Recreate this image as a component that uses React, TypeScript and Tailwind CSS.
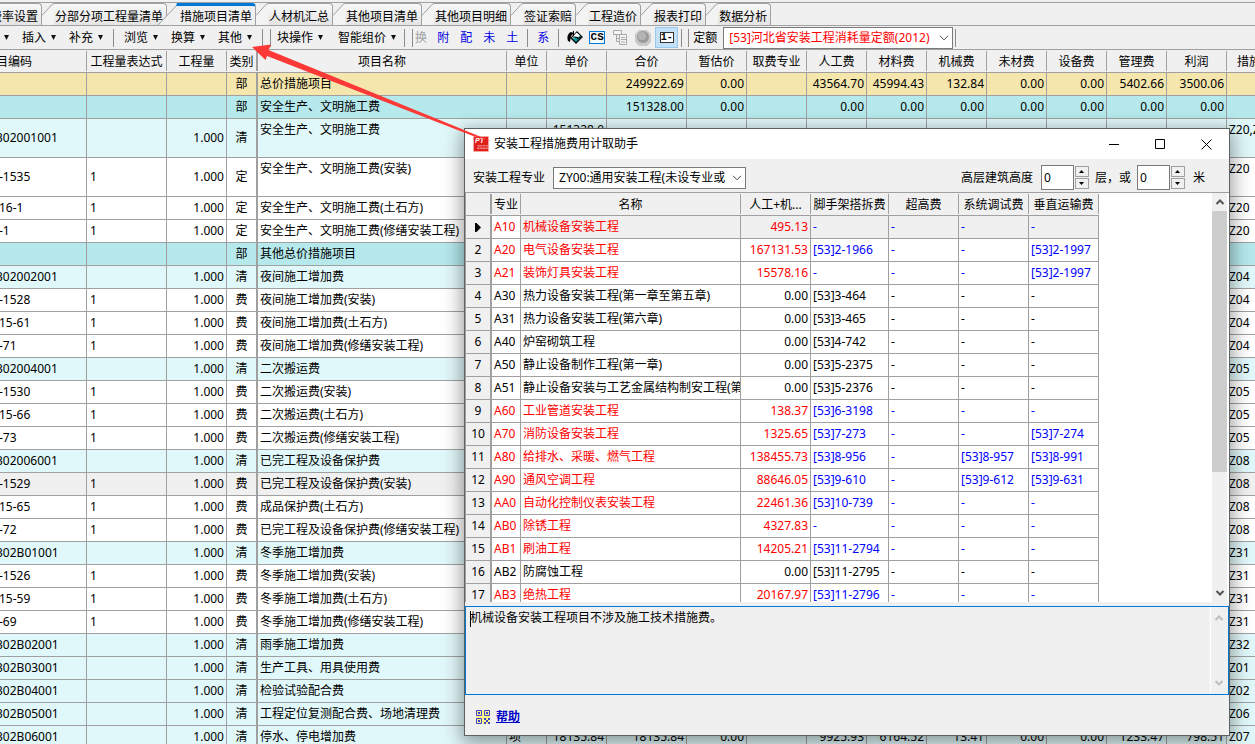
import React from "react";

type MainRow = {
  code?: string;
  expr?: string;
  qty?: string;
  kind: string;
  name: string;
  tone: "total" | "part" | "list" | "plain" | "focus";
  tall?: boolean;
  unit?: string;
  values?: string[];
  tag?: string;
};

const toneClass = {
  total: "bg-[#f4e6ac]",
  part: "bg-[#b5e9ec]",
  list: "bg-[#e1f8fa]",
  plain: "bg-white",
  focus: "bg-[#f0f0f0]",
};

const zeros = ["", "151328.00", "0.00", "", "0.00", "0.00", "0.00", "0.00", "0.00", "0.00", "0.00"];

const list = (code: string, name: string, tag: string): MainRow => ({ code, qty: "1.000", kind: "清", name, tone: "list", tag });
const fee = (code: string, name: string, tag: string, kind = "费"): MainRow => ({ code, expr: "1", qty: "1.000", kind, name, tone: "plain", tag });

const mainRows: MainRow[] = [
  {
    kind: "部",
    name: "总价措施项目",
    tone: "total",
    values: ["", "249922.69", "0.00", "", "43564.70", "45994.43", "132.84", "0.00", "0.00", "5402.66", "3500.06"],
  },
  { kind: "部", name: "安全生产、文明施工费", tone: "part", values: zeros },
  { ...list("302001001", "安全生产、文明施工费", "Z20,Z20"), tall: true, values: ["151328.0"] },
  { ...fee("-1535", "安全生产、文明施工费(安装)", "Z20", "定"), tall: true },
  fee("16-1", "安全生产、文明施工费(土石方)", "Z20", "定"),
  fee("-1", "安全生产、文明施工费(修缮安装工程)", "Z20", "定"),
  { kind: "部", name: "其他总价措施项目", tone: "part" },
  list("302002001", "夜间施工增加费", "Z04"),
  fee("-1528", "夜间施工增加费(安装)", "Z04"),
  fee("15-61", "夜间施工增加费(土石方)", "Z04"),
  fee("-71", "夜间施工增加费(修缮安装工程)", "Z04"),
  list("302004001", "二次搬运费", "Z05"),
  fee("-1530", "二次搬运费(安装)", "Z05"),
  fee("15-66", "二次搬运费(土石方)", "Z05"),
  fee("-73", "二次搬运费(修缮安装工程)", "Z05"),
  list("302006001", "已完工程及设备保护费", "Z08"),
  { ...fee("-1529", "已完工程及设备保护费(安装)", "Z08"), tone: "focus" },
  fee("15-65", "成品保护费(土石方)", "Z08"),
  fee("-72", "已完工程及设备保护费(修缮安装工程)", "Z08"),
  list("302B01001", "冬季施工增加费", "Z31"),
  fee("-1526", "冬季施工增加费(安装)", "Z31"),
  fee("15-59", "冬季施工增加费(土石方)", "Z31"),
  fee("-69", "冬季施工增加费(修缮安装工程)", "Z31"),
  list("302B02001", "雨季施工增加费", "Z32"),
  list("302B03001", "生产工具、用具使用费", "Z01"),
  list("302B04001", "检验试验配合费", "Z02"),
  list("302B05001", "工程定位复测配合费、场地清理费", "Z06"),
  {
    ...list("302B06001", "停水、停电增加费", "Z07"),
    unit: "项",
    values: ["18135.84", "18135.84", "0.00", "", "9925.93", "6164.52", "13.41", "0.00", "0.00", "1233.47", "798.51"],
  },
];

const valueHeads = ["单价", "合价", "暂估价", "取费专业", "人工费", "材料费", "机械费", "未材费", "设备费", "管理费", "利润"];

type DialogRow = [code: string, name: string, base: string, scaffold: string, high: string, debug: string, lift: string];

const dialogRows: DialogRow[] = [
  ["A10", "机械设备安装工程", "495.13", "-", "-", "-", "-"],
  ["A20", "电气设备安装工程", "167131.53", "[53]2-1966", "-", "-", "[53]2-1997"],
  ["A21", "装饰灯具安装工程", "15578.16", "-", "-", "-", "[53]2-1997"],
  ["A30", "热力设备安装工程(第一章至第五章)", "0.00", "[53]3-464", "-", "-", "-"],
  ["A31", "热力设备安装工程(第六章)", "0.00", "[53]3-465", "-", "-", "-"],
  ["A40", "炉窑砌筑工程", "0.00", "[53]4-742", "-", "-", "-"],
  ["A50", "静止设备制作工程(第一章)", "0.00", "[53]5-2375", "-", "-", "-"],
  ["A51", "静止设备安装与工艺金属结构制安工程(第", "0.00", "[53]5-2376", "-", "-", "-"],
  ["A60", "工业管道安装工程", "138.37", "[53]6-3198", "-", "-", "-"],
  ["A70", "消防设备安装工程", "1325.65", "[53]7-273", "-", "-", "[53]7-274"],
  ["A80", "给排水、采暖、燃气工程", "138455.73", "[53]8-956", "-", "[53]8-957", "[53]8-991"],
  ["A90", "通风空调工程", "88646.05", "[53]9-610", "-", "[53]9-612", "[53]9-631"],
  ["AA0", "自动化控制仪表安装工程", "22461.36", "[53]10-739", "-", "-", "-"],
  ["AB0", "除锈工程", "4327.83", "-", "-", "-", "-"],
  ["AB1", "刷油工程", "14205.21", "[53]11-2794", "-", "-", "-"],
  ["AB2", "防腐蚀工程", "0.00", "[53]11-2795", "-", "-", "-"],
  ["AB3", "绝热工程", "20167.97", "[53]11-2796", "-", "-", "-"],
];

const cell = "h-[23px] overflow-hidden whitespace-nowrap border-r border-b border-[#a0a0a0] p-0 leading-[22px]";

function HeadCell({ children, className = "", inner = "" }: { children?: React.ReactNode; className?: string; inner?: string }) {
  return (
    <th className={`overflow-hidden border-b border-[#a0a0a0] bg-[#f0f0f0] p-0 font-normal whitespace-nowrap ${className}`}>
      <div className={`my-px flex h-5 items-center justify-center border-r border-[#a0a0a0] pt-0.5 ${inner}`}>{children}</div>
    </th>
  );
}

function Tab({ label, active = false }: { label: string; active?: boolean }) {
  return (
    <button role="tab" aria-selected={active} className={`relative flex h-[22px] ${active ? "z-10 -ml-[9px]" : ""}`}>
      {active ? (
        <svg width="21" height="22" viewBox="0 0 21 22" className="shrink-0">
          <path d="M0 22L20 1H21V22Z" fill="#f0f0f0" />
          <path d="M0 22L20 1" stroke="#a0a0a0" fill="none" />
          <path d="M21 0H19L18 3H21Z" fill="#0078d7" />
        </svg>
      ) : (
        <svg width="12" height="22" viewBox="0 0 12 22" className="shrink-0">
          <path d="M0 12.500L10 1L12 .5V22H0Z" fill="#f3f3f3" />
          <path d="M0 12.500L10 1.500L12 .5" stroke="#a0a0a0" fill="none" />
        </svg>
      )}
      <span
        className={`flex h-[22px] items-center rounded-tr-sm border-r border-[#a0a0a0] pr-[3px] pl-px whitespace-nowrap ${
          active ? "border-t-[3px] border-t-[#0078d7] bg-[#f0f0f0] pt-0.5" : "border-t bg-linear-to-b from-[#f8f8f8] to-[#e4e4e4] pt-1"
        }`}
      >
        {label}
      </span>
    </button>
  );
}

function Sep({ className = "" }: { className?: string }) {
  return <span className={`h-[18px] w-px shrink-0 bg-[#8c8c8c] ${className}`} />;
}

function Caret() {
  return (
    <svg width="5" height="5" viewBox="0 0 5 5" className="shrink-0">
      <path d="M0 0H5L2.500 5Z" fill="#111" />
    </svg>
  );
}

function MenuButton({ label }: { label: string }) {
  return (
    <button className="flex shrink-0 items-center gap-[5px] pr-[7px] pl-1.5 whitespace-nowrap">
      {label}
      <Caret />
    </button>
  );
}

function Chevron({ up = false, color = "#555", className = "" }: { up?: boolean; color?: string; className?: string }) {
  return (
    <svg width="10" height="6" viewBox="0 0 10 6" className={className}>
      <path d={up ? "M1.500 5L5 1.500L8.500 5" : "M1.500 1L5 4.500L8.500 1"} fill="none" stroke={color} strokeWidth="2" />
    </svg>
  );
}

function ThinChevron() {
  return (
    <svg width="10" height="6" viewBox="0 0 10 6" className="pointer-events-none absolute top-1/2 right-1 -mt-[3px]">
      <path d="M1 .8L5 4.800L9 .8" fill="none" stroke="#444" />
    </svg>
  );
}

function Spinner({ label }: { label: string }) {
  return (
    <span className="flex items-center gap-px">
      <input aria-label={label} defaultValue="0" className="h-[25px] w-[33px] border border-[#7a7a7a] bg-white pb-px pl-0.5 outline-none" />
      <span className="flex flex-col gap-px">
        {["增加", "减少"].map((name, i) => (
          <button key={name} aria-label={`${label}${name}`} className="flex h-[11px] w-3.5 items-center justify-center border border-[#a0a0a0] bg-[#f0f0f0]">
            <svg width="5" height="3" viewBox="0 0 5 3">
              <path d={i === 0 ? "M0 3L2.500 0L5 3Z" : "M0 0L2.500 3L5 0Z"} fill="#000" />
            </svg>
          </button>
        ))}
      </span>
    </span>
  );
}

function Toolbar() {
  return (
    <div className="flex h-[24px] shrink-0 items-center border-b border-[#a0a0a0]">
      <button aria-label="更多" className="flex pr-[7px] pl-1">
        <Caret />
      </button>
      <MenuButton label="插入" />
      <MenuButton label="补充" />
      <Sep className="mr-1 ml-[3px]" />
      <MenuButton label="浏览" />
      <MenuButton label="换算" />
      <MenuButton label="其他" />
      <Sep className="mr-[7px] ml-[3px]" />
      <Sep />
      <MenuButton label="块操作" />
      <span className="w-0.5" />
      <MenuButton label="智能组价" />
      <Sep className="mr-[7px] ml-px" />
      <Sep className="mr-0.5" />
      <button disabled className="text-[#a0a0a0]">换</button>
      <div className="ml-2.5 flex gap-[11px] text-[#0000e6]">
        <button>附</button>
        <button>配</button>
        <button>未</button>
        <button>土</button>
      </div>
      <Sep className="mx-[9px]" />
      <button className="text-[#0000e6]">系</button>
      <Sep className="mr-2 ml-[9px]" />
      <button aria-label="填充">
        <svg width="16" height="13" viewBox="0 0 16 13">
          <path d="M1 10C-.5 6 1 2 4 1L7 2L4 5L3 11Z" fill="#000" />
          <path d="M10 1L15 6L9 12L4 7Z" fill="#089c9c" stroke="#000" strokeWidth="1.300" />
          <path d="M9.500 1.500L5 6.500L7 7.500L9 5L10 7L13 4.500Z" fill="#fff" />
          <path d="M6 6L11 6.500L10 8L14 6" fill="none" stroke="#000" />
          <path d="M6.500 0V5" stroke="#000" />
        </svg>
      </button>
      <button className="ml-1.5 flex h-[13px] w-4 items-center justify-center border border-[#0078d7] bg-[#f4fbff] font-['Liberation_Mono',monospace] text-[11px] leading-none font-bold">
        CS
      </button>
      <button aria-label="结构" className="ml-2">
        <svg width="15" height="15" viewBox="0 0 15 15" fill="#f4f4f4" stroke="#a8a8a8">
          <path d="M3.500 5V11.500H7M3.500 8.500H7" fill="none" />
          <path d="M.5 .5H8.500V4.500H.5ZM6.500 4.500H13.500V14.500H6.500Z" />
          <path d="M8 7.500H12M8 9.500H13M8 12H12" />
        </svg>
      </button>
      <button aria-label="状态" className="ml-[7px]">
        <svg width="16" height="16" viewBox="0 0 16 16">
          <path d="M4 0H12L16 4V12L12 16H4L0 12V4Z" fill="#c9c9c9" />
          <circle cx="8" cy="7" r="6" fill="#9a9a9a" />
          <circle cx="7" cy="6" r="4" fill="#b4b4b4" />
        </svg>
      </button>
      <button className="ml-1 flex h-[21px] w-[23px] items-center justify-center border border-[#99c9ef] bg-[#c4e0f7]">
        <span className="flex h-[11px] w-3.5 items-center justify-center border border-[#333] bg-white font-['Liberation_Mono',monospace] text-[10px] leading-none font-bold">1-</span>
      </button>
      <Sep className="mr-[6px] ml-[3px]" />
      <Sep className="mr-1" />
      <label htmlFor="quota" className="mr-1.5 whitespace-nowrap">定额</label>
      <span className="relative">
        <select id="quota" className="block h-[22px] w-[230px] appearance-none border border-[#7a7a7a] bg-white pl-[5px] text-[12px] text-[#ff0000] outline-none">
          <option>[53]河北省安装工程消耗量定额(2012)</option>
        </select>
        <ThinChevron />
      </span>
      <Sep className="ml-[2px]" />
    </div>
  );
}

function MainTable() {
  const widths = ["w-[87px]", "w-20", "w-[60px]", "w-[31px]", "w-[249px]", "w-10", "w-[60px]", "w-20", ...Array<string>(9).fill("w-[60px]"), ""];
  return (
    <table className="w-full table-fixed border-separate border-spacing-0">
      <colgroup>
        {widths.map((w, i) => (
          <col key={i} className={w} />
        ))}
      </colgroup>
      <thead>
        <tr>
          <HeadCell inner="!justify-start">
            <span className="-ml-1">目编码</span>
          </HeadCell>
          <HeadCell>工程量表达式</HeadCell>
          <HeadCell>工程量</HeadCell>
          <HeadCell inner="border-r-2">类别</HeadCell>
          <HeadCell>项目名称</HeadCell>
          <HeadCell>单位</HeadCell>
          {valueHeads.map((h) => (
            <HeadCell key={h}>{h}</HeadCell>
          ))}
          <HeadCell inner="!justify-start border-r-0 pl-2.5">措施</HeadCell>
        </tr>
      </thead>
      <tbody>
        {mainRows.map((r, i) => (
          <tr key={i} className={`${toneClass[r.tone]} ${r.tall ? "h-[39px]" : ""}`}>
            <td className={cell}>
              <span className={r.tone === "list" ? "-ml-1" : "-ml-px"}>{r.code}</span>
            </td>
            <td className={`${cell} pl-[3px]`}>{r.expr}</td>
            <td className={`${cell} pr-0.5 text-right`}>{r.qty}</td>
            <td className={`${cell} border-r-2 text-center`}>{r.kind}</td>
            <td className={`${cell} pl-0.5 align-top`}>{r.name}</td>
            <td className={`${cell} pl-0.5`}>{r.unit}</td>
            {valueHeads.map((h, k) => (
              <td key={h} className={`${cell} pr-0.5 text-right align-top`}>
                {r.values?.[k]}
              </td>
            ))}
            <td className={`${cell} border-r-0 pl-0.5 align-top`}>{r.tag}</td>
          </tr>
        ))}
      </tbody>
    </table>
  );
}

function DialogTable() {
  return (
    <table className="w-[634px] table-fixed border-separate border-spacing-0 border-l border-[#a0a0a0]">
      <colgroup>
        <col className="w-[26px]" />
        <col className="w-[29px]" />
        <col className="w-[220px]" />
        <col className="w-[70px]" />
        <col className="w-[78px]" />
        <col className="w-[70px]" />
        <col className="w-[70px]" />
        <col className="w-[70px]" />
      </colgroup>
      <thead>
        <tr>
          <HeadCell inner="border-r-2" />
          <HeadCell>专业</HeadCell>
          <HeadCell>名称</HeadCell>
          <HeadCell>人工+机...</HeadCell>
          <HeadCell>脚手架搭拆费</HeadCell>
          <HeadCell>超高费</HeadCell>
          <HeadCell>系统调试费</HeadCell>
          <HeadCell>垂直运输费</HeadCell>
        </tr>
      </thead>
      <tbody>
        {dialogRows.map(([code, name, base, ...refs], i) => {
          const active = base !== "0.00";
          const bg = i === 0 ? "bg-[#f0f0f0]" : "bg-white";
          const red = active ? "text-[#ff0000]" : "";
          const blue = active ? "text-[#0000ff]" : "";
          return (
            <tr key={code} className={bg}>
              <td className={`${cell} border-r-2 bg-[#f0f0f0] text-center`}>
                {i === 0 ? (
                  <svg width="6" height="9" viewBox="0 0 6 9" className="mx-auto">
                    <path d="M0 0H1.500L6 4.500L1.500 9H0Z" fill="#000" />
                  </svg>
                ) : (
                  i + 1
                )}
              </td>
              <td className={`${cell} bg-white pl-0.5 ${red}`}>{code}</td>
              <td className={`${cell} pl-0.5 ${red}`}>{name}</td>
              <td className={`${cell} pr-0.5 text-right ${red}`}>{base}</td>
              {refs.map((v, k) => (
                <td key={k} className={`${cell} pl-0.5 ${blue}`}>
                  {v}
                </td>
              ))}
            </tr>
          );
        })}
      </tbody>
    </table>
  );
}

function AppIcon() {
  return (
    <svg width="16" height="16" viewBox="0 0 16 16" className="shrink-0">
      <rect width="16" height="16" rx="1" fill="#f4a6a0" />
      <rect x="1" y="1" width="14" height="14" fill="#e0201b" />
      <text x="2" y="7" fontSize="7" fontWeight="bold" fontStyle="italic" fill="#fff" fontFamily="Liberation Sans, sans-serif">PT</text>
      <text x="4" y="13" fontSize="5" fill="#f8c8c4" fontFamily="Liberation Sans, sans-serif">2022</text>
    </svg>
  );
}

function QrIcon() {
  return (
    <svg width="14" height="14" viewBox="0 0 14 14" className="shrink-0">
      <rect width="14" height="14" fill="#fdf58c" />
      <path d="M.5 .5H5.500V5.500H.5ZM8.500 .5H13.500V5.500H8.500ZM.5 8.500H5.500V13.500H.5Z" fill="none" stroke="#3a45c8" />
      <path d="M2 2H4V4H2ZM10 2H12V4H10ZM2 10H4V12H2ZM8 8H10V10H8ZM12 8H14V10H12ZM10 10H12V12H10ZM8 12H10V14H8ZM12 12H14V14H12Z" fill="#3a45c8" />
    </svg>
  );
}

function Dialog() {
  const control = "flex h-[31px] w-[46px] items-center justify-center";
  return (
    <div
      role="dialog"
      aria-labelledby="dialog-title"
      className="absolute top-[128px] left-[464px] z-20 flex w-[766px] flex-col border border-[#5a6262] bg-[#f0f0f0] shadow-[0_5px_18px_2px_rgba(0,0,0,0.4)]"
    >
      <div className="flex h-[30px] items-center bg-white pl-2">
        <AppIcon />
        <h1 id="dialog-title" className="ml-[5px] flex-1">安装工程措施费用计取助手</h1>
        <button aria-label="最小化" className={control}>
          <svg width="10" height="10" viewBox="0 0 10 10"><path d="M0 5.500H10" stroke="#000" /></svg>
        </button>
        <button aria-label="最大化" className={control}>
          <svg width="10" height="10" viewBox="0 0 10 10"><path d="M.5 .5H9.500V9.500H.5Z" fill="none" stroke="#000" /></svg>
        </button>
        <button aria-label="关闭" className={control}>
          <svg width="11" height="11" viewBox="0 0 11 11"><path d="M.5 .5L10.500 10.500M10.500 .5L.5 10.500" stroke="#000" /></svg>
        </button>
      </div>
      <div className="flex h-[34px] items-center border-b border-[#a0a0a0] pt-1 pr-6 pl-2">
        <label htmlFor="major">安装工程专业</label>
        <span className="relative mr-auto ml-2">
          <select id="major" className="block h-[22px] w-[193px] appearance-none border border-[#7a7a7a] bg-white pr-4 pl-[5px] text-[12px] outline-none">
            <option>ZY00:通用安装工程(未设专业或</option>
          </select>
          <ThinChevron />
        </span>
        <span className="mr-2">高层建筑高度</span>
        <Spinner label="层数" />
        <span className="mr-[6px] ml-1.5">层，或</span>
        <Spinner label="米数" />
        <span className="ml-2">米</span>
      </div>
      <div className="flex h-[409px] overflow-hidden bg-white">
        <div className="min-w-0 flex-1">
          <DialogTable />
        </div>
        <div className="mr-0.5 flex w-[15px] flex-col items-center bg-[#f0f0f0]">
          <Chevron up className="my-[6px] shrink-0" />
          <div className="h-[261px] w-full shrink-0 bg-[#cdcdcd]" />
          <Chevron className="mt-auto mb-1.5 shrink-0" />
        </div>
      </div>
      <div className="relative mt-1 flex h-[89px] border border-[#0078d7]">
        <span className="absolute top-1 left-1 h-4 w-px bg-black" />
        <textarea
          aria-label="说明"
          readOnly
          defaultValue="机械设备安装工程项目不涉及施工技术措施费。"
          className="flex-1 resize-none bg-[#f0f0f0] px-1 py-0.5 text-[12px] leading-[18px] outline-none"
        />
        <div className="mr-px flex w-[17px] flex-col items-center justify-between border-l border-white py-2">
          <Chevron up color="#bfbfbf" />
          <Chevron color="#bfbfbf" />
        </div>
      </div>
      <div className="flex h-[40px] items-center gap-1.5 pt-1 pl-[11px]">
        <QrIcon />
        <a href="#help" className="font-bold text-[#0000c8] underline">帮助</a>
      </div>
    </div>
  );
}

export default function App() {
  return (
    <div
      lang="zh-CN"
      className="relative flex h-screen w-full flex-col overflow-hidden bg-[#f0f0f0] font-['Noto_Sans','Noto_Sans_CJK_SC',sans-serif] text-[12px] leading-4 text-black"
    >
      <div className="h-[3px] shrink-0 border-b border-[#a0a0a0]" />
      <div role="tablist" className="flex h-[23px] shrink-0 items-end border-b border-[#a0a0a0]">
        <button role="tab" aria-selected="false" className="flex h-[22px] w-[42px] items-center justify-end overflow-hidden rounded-tr-sm border-t border-r border-[#a0a0a0] bg-linear-to-b from-[#f8f8f8] to-[#e4e4e4] pt-1 pr-[3px] whitespace-nowrap">
          费率设置
        </button>
        <Tab label="分部分项工程量清单" />
        <Tab label="措施项目清单" active />
        <Tab label="人材机汇总" />
        <Tab label="其他项目清单" />
        <Tab label="其他项目明细" />
        <Tab label="签证索赔" />
        <Tab label="工程造价" />
        <Tab label="报表打印" />
        <Tab label="数据分析" />
      </div>
      <Toolbar />
      <div className="min-h-0 flex-1 overflow-hidden">
        <MainTable />
      </div>
      <Dialog />
      <svg width="245" height="100" viewBox="0 0 245 100" className="pointer-events-none absolute top-[44px] left-[250px] z-30">
        <path d="M2 3L21 .5L18.500 6L241 97L223 92L17 12L15.500 16Z" fill="#fb3a37" />
      </svg>
    </div>
  );
}
